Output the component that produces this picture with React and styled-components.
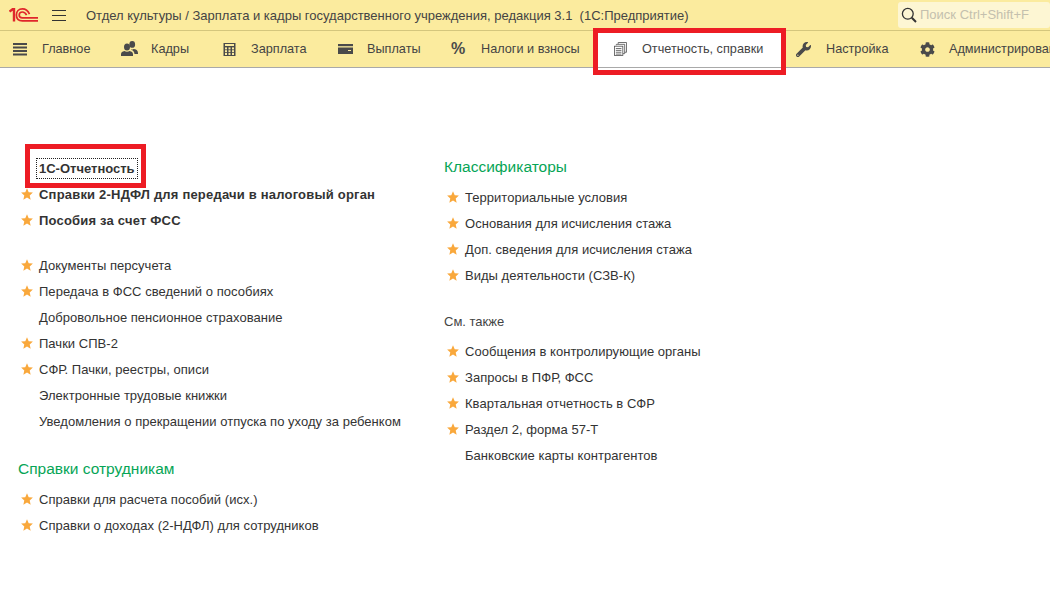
import styled, { createGlobalStyle } from 'styled-components';
import { FaWrench, FaCog } from 'react-icons/fa';

const GlobalStyle = createGlobalStyle`
  html, body {
    margin: 0;
    padding: 0;
    background: #fff;
    overflow: hidden;
  }
  body {
    font-family: "Liberation Sans", Arial, sans-serif;
    color: #333;
  }
`;

const leftTop = [
  { text: 'Справки 2-НДФЛ для передачи в налоговый орган', star: true, bold: true },
  { text: 'Пособия за счет ФСС', star: true, bold: true },
];

const leftMain = [
  { text: 'Документы персучета', star: true },
  { text: 'Передача в ФСС сведений о пособиях', star: true },
  { text: 'Добровольное пенсионное страхование' },
  { text: 'Пачки СПВ-2', star: true },
  { text: 'СФР. Пачки, реестры, описи', star: true },
  { text: 'Электронные трудовые книжки' },
  { text: 'Уведомления о прекращении отпуска по уходу за ребенком' },
];

const leftStaff = [
  { text: 'Справки для расчета пособий (исх.)', star: true },
  { text: 'Справки о доходах (2-НДФЛ) для сотрудников', star: true },
];

const classifiers = [
  { text: 'Территориальные условия', star: true },
  { text: 'Основания для исчисления стажа', star: true },
  { text: 'Доп. сведения для исчисления стажа', star: true },
  { text: 'Виды деятельности (СЗВ-К)', star: true },
];

const seeAlso = [
  { text: 'Сообщения в контролирующие органы', star: true },
  { text: 'Запросы в ПФР, ФСС', star: true },
  { text: 'Квартальная отчетность в СФР', star: true },
  { text: 'Раздел 2, форма 57-Т', star: true },
  { text: 'Банковские карты контрагентов' },
];

const Logo = () => (
  <svg width="29" height="14" viewBox="0 0 29 14" fill="none" stroke="#e0262b">
    <path d="M0.5 3.6 L3.6 1.2 H5 V13.5" strokeWidth="2.4" />
    <path d="M20.5 6.2 C19 2.6 16.2 0.9 13.4 0.9 C9.8 0.9 7.4 3.6 7.4 7 C7.4 10.6 9.8 12.9 13.4 12.9 H29" strokeWidth="1.7" />
    <path d="M17.6 7.2 C16.6 5 15.2 4 13.4 4 C11.4 4 10.2 5.4 10.2 7 C10.2 8.7 11.4 9.9 13.4 9.9 H29" strokeWidth="1.7" />
  </svg>
);

const LinesIcon = () => (
  <svg width="15" height="15" viewBox="0 0 15 15" fill="#4a4a4a">
    <rect x="0" y="1" width="14" height="2" />
    <rect x="0" y="4.5" width="14" height="2" />
    <rect x="0" y="8" width="14" height="2" />
    <rect x="0" y="11.5" width="14" height="2" />
  </svg>
);

const PeopleIcon = () => (
  <svg width="17" height="16" viewBox="0 0 17 16" fill="#4a4a4a">
    <ellipse cx="11.2" cy="3.4" rx="2.9" ry="3.4" />
    <path d="M10 8 C11 8.8 11.6 8.8 12.5 8 C15 8 17 9.5 17 12 V13 H13.5 C13.4 10.8 12 9.3 10 8.6 Z" />
    <ellipse cx="6" cy="6" rx="3" ry="3.5" />
    <path d="M0 15 V13.2 C0 11.6 1.4 10.3 3.4 10 C4.7 11 7.3 11 8.6 10 C10.6 10.3 12 11.6 12 13.2 V15 Z" />
  </svg>
);

const CalcIcon = () => (
  <svg width="13" height="15" viewBox="0 0 13 15" fill="#4a4a4a">
    <path d="M0.5 1 H12.5 V14 H0.5 Z M2 2 V4 H11 V2 Z" fillRule="evenodd" />
    <g fill="#fbeb9e">
      <rect x="2" y="5.4" width="2" height="2" />
      <rect x="5.5" y="5.4" width="2" height="2" />
      <rect x="9" y="5.4" width="2" height="2" />
      <rect x="2" y="8.2" width="2" height="2" />
      <rect x="5.5" y="8.2" width="2" height="2" />
      <rect x="9" y="8.2" width="2" height="2" />
      <rect x="2" y="11" width="2" height="2" />
      <rect x="5.5" y="11" width="2" height="2" />
      <rect x="9" y="11" width="2" height="2" />
    </g>
  </svg>
);

const CardIcon = () => (
  <svg width="15" height="12" viewBox="0 0 15 12" fill="#4a4a4a">
    <path d="M0 1 H15 V3.2 H0 Z" />
    <path d="M0 4.6 H15 V11 H0 Z M10 7 V8 H13 V7 Z" fillRule="evenodd" />
  </svg>
);

const DocsIcon = () => (
  <svg width="13" height="14" viewBox="0 0 14 15" fill="none" stroke="#555" strokeWidth="0.9">
    <path d="M4.5 2 V0.5 H13.5 V11 H11.5" />
    <path d="M2.5 3.5 V2.5 H11.5 V12.5 H9.5" />
    <rect x="0.5" y="4.5" width="9" height="10" fill="#fff" />
    <path d="M2 7 H8 M2 9 H8 M2 11 H8 M2 13 H8" />
  </svg>
);

const SearchIcon = () => (
  <svg width="16" height="16" viewBox="0 0 16 16" fill="none" stroke="#333" strokeWidth="1.3">
    <circle cx="6.8" cy="6.8" r="5.4" />
    <path d="M10.8 10.8 L15 15" strokeWidth="2" />
  </svg>
);

const StarIcon = () => (
  <svg width="12" height="12" viewBox="0 0 24 24" fill="#f9a83c">
    <path d="M12 0.5 L15.4 8.4 L23.8 9.2 L17.4 14.9 L19.3 23.4 L12 19 L4.7 23.4 L6.6 14.9 L0.2 9.2 L8.6 8.4 Z" />
  </svg>
);

const Link = ({ item }) => (
  <Row>
    <StarSlot>{item.star && <StarIcon />}</StarSlot>
    <RowText $bold={item.bold}>{item.text}</RowText>
  </Row>
);

export default function App() {
  return (
    <>
      <GlobalStyle />
      <TitleBar>
        <LogoSlot><Logo /></LogoSlot>
        <Burger><span /><span /><span /></Burger>
        <Title>Отдел культуры / Зарплата и кадры государственного учреждения, редакция 3.1&nbsp; (1С:Предприятие)</Title>
        <Search>
          <SearchIcon />
          <SearchText>Поиск Ctrl+Shift+F</SearchText>
        </Search>
      </TitleBar>
      <Nav>
        <NavItem $w={106} $gap={14} $pl={13}><IconBox $w={15}><LinesIcon /></IconBox>Главное</NavItem>
        <NavItem $w={102} $gap={13} $pl={15}><IconBox $w={17}><PeopleIcon /></IconBox>Кадры</NavItem>
        <NavItem $w={114} $gap={15} $pl={15}><IconBox $w={13}><CalcIcon /></IconBox>Зарплата</NavItem>
        <NavItem $w={114} $gap={14} $pl={16}><IconBox $w={15}><CardIcon /></IconBox>Выплаты</NavItem>
        <NavItem $w={158} $gap={15} $pl={15}><Percent>%</Percent>Налоги и взносы</NavItem>
        <ActiveTab>
          <IconBox $w={14}><DocsIcon /></IconBox>
          Отчетность, справки
          <RedFrame $top={-3} $left={-4} $right={-4} $bottom={-8} />
        </ActiveTab>
        <NavItem $w={125} $gap={15} $pl={14}><IconBox $w={15}><FaWrench size={15} color="#4a4a4a" /></IconBox>Настройка</NavItem>
        <NavItem $w={150} $gap={14} $pl={13}><IconBox $w={15}><FaCog size={15} color="#4a4a4a" /></IconBox>Администрирование</NavItem>
      </Nav>
      <Content>
        <LeftColumn>
          <Row>
            <StarSlot />
            <FocusText>1С-Отчетность<RedFrame $top={-17} $left={-14} $right={-11} $bottom={-12} /></FocusText>
          </Row>
          {leftTop.map((item) => <Link key={item.text} item={item} />)}
          <Spacer $h={19} />
          {leftMain.map((item) => <Link key={item.text} item={item} />)}
          <GreenHeading $mt={22}>Справки сотрудникам</GreenHeading>
          {leftStaff.map((item) => <Link key={item.text} item={item} />)}
        </LeftColumn>
        <RightColumn>
          <GreenHeading $mt={-1}>Классификаторы</GreenHeading>
          {classifiers.map((item) => <Link key={item.text} item={item} />)}
          <SmallHeading>См. также</SmallHeading>
          {seeAlso.map((item) => <Link key={item.text} item={item} />)}
        </RightColumn>
      </Content>
    </>
  );
}

const TitleBar = styled.div`
  height: 31px;
  box-sizing: border-box;
  background: #fbeb9e;
  border-bottom: 1px solid #d4c67d;
  display: flex;
  align-items: center;
  padding-left: 9px;
`;

const LogoSlot = styled.div`
  width: 43px;
  display: flex;
`;

const Burger = styled.div`
  width: 14px;
  display: flex;
  flex-direction: column;
  gap: 4px;
  margin-right: 20px;
  span {
    height: 1px;
    background: #333;
  }
`;

const Title = styled.div`
  font-size: 13px;
  color: #444;
  white-space: nowrap;
  flex: 1;
`;

const Search = styled.div`
  width: 152px;
  height: 26px;
  margin-top: -1px;
  box-sizing: border-box;
  background: #fdf6d3;
  border-radius: 3px;
  display: flex;
  align-items: center;
  padding-left: 3px;
  gap: 3px;
`;

const SearchText = styled.span`
  font-size: 13px;
  color: #c4c0ae;
  white-space: nowrap;
`;

const Nav = styled.div`
  height: 37px;
  box-sizing: border-box;
  background: #fbeb9e;
  border-bottom: 1px solid #a9a9a9;
  display: flex;
  align-items: stretch;
  white-space: nowrap;
  font-size: 12.7px;
  color: #444;
`;

const NavItem = styled.div`
  flex: none;
  width: ${(p) => p.$w}px;
  box-sizing: border-box;
  padding-left: ${(p) => p.$pl}px;
  display: flex;
  align-items: center;
  gap: ${(p) => p.$gap}px;
`;

const IconBox = styled.span`
  width: ${(p) => p.$w}px;
  flex: none;
  display: flex;
  align-items: center;
  justify-content: center;
`;

const Percent = styled.span`
  font-size: 16px;
  font-weight: 700;
  color: #4a4a4a;
  width: 15px;
`;

const ActiveTab = styled.div`
  position: relative;
  flex: none;
  width: 185px;
  margin-left: 3px;
  background: #fff;
  box-sizing: border-box;
  padding-left: 16px;
  display: flex;
  align-items: center;
  gap: 15px;
`;

const RedFrame = styled.span`
  position: absolute;
  top: ${(p) => p.$top}px;
  left: ${(p) => p.$left}px;
  right: ${(p) => p.$right}px;
  bottom: ${(p) => p.$bottom}px;
  border: 5px solid #ed1c24;
  pointer-events: none;
`;

const Content = styled.div`
  display: flex;
  padding: 87px 0 0 18px;
`;

const LeftColumn = styled.div`
  width: 426px;
  flex: none;
  display: flex;
  flex-direction: column;
`;

const RightColumn = styled.div`
  display: flex;
  flex-direction: column;
`;

const Row = styled.div`
  height: 26px;
  display: flex;
  align-items: center;
`;

const StarSlot = styled.span`
  width: 21px;
  flex: none;
  padding-left: 3px;
  box-sizing: border-box;
  display: flex;
  align-items: center;
`;

const RowText = styled.span`
  font-size: 13px;
  letter-spacing: ${(p) => (p.$bold ? 0.2 : 0.03)}px;
  font-weight: ${(p) => (p.$bold ? 700 : 400)};
  color: #333;
  white-space: nowrap;
`;

const FocusText = styled.span`
  position: relative;
  font-size: 13px;
  font-weight: 700;
  color: #333;
  outline: 1px dotted #222;
  outline-offset: 2px;
  white-space: nowrap;
`;

const Spacer = styled.div`
  height: ${(p) => p.$h}px;
`;

const GreenHeading = styled.div`
  height: 26px;
  margin-top: ${(p) => p.$mt || 0}px;
  margin-bottom: 4px;
  display: flex;
  align-items: center;
  font-size: 15.5px;
  color: #06a556;
`;

const SmallHeading = styled.div`
  height: 26px;
  margin-top: 20px;
  margin-bottom: 4px;
  display: flex;
  align-items: center;
  font-size: 13px;
  color: #444;
`;
